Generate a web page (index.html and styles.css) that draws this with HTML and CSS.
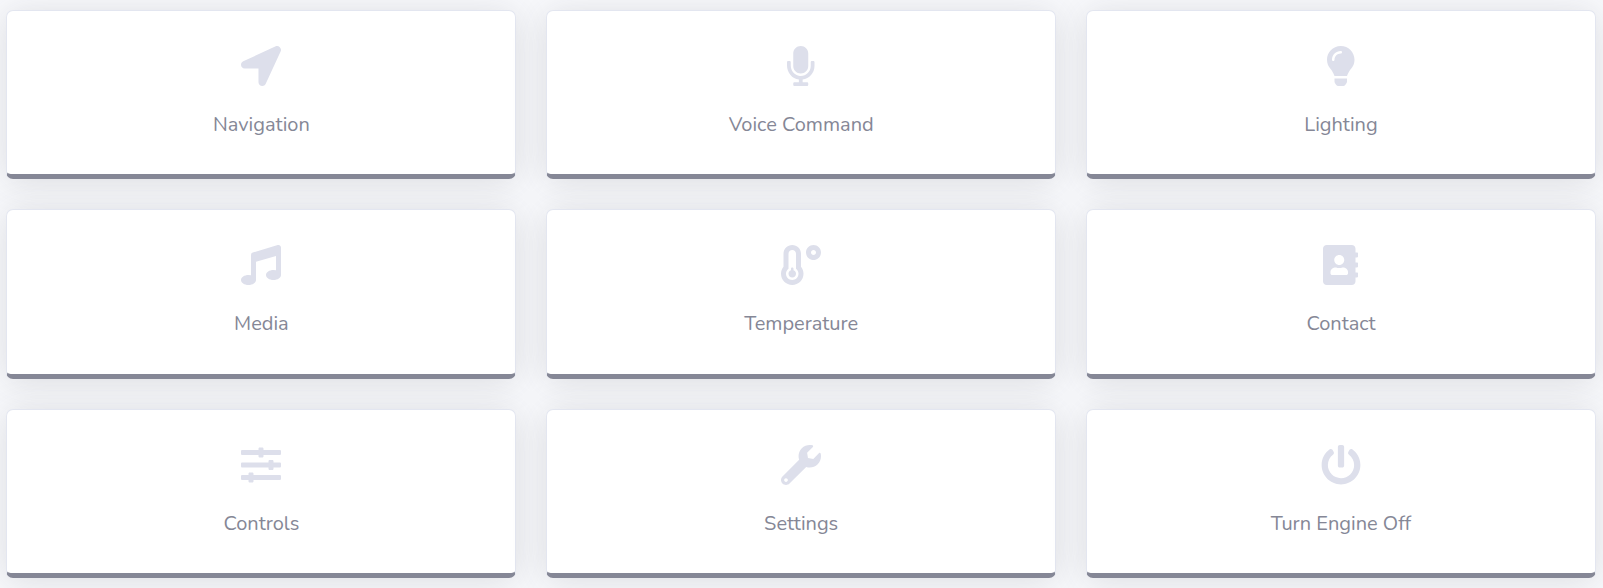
FILE: index.html
```
<!DOCTYPE html>
<html lang="en">
<head>
<meta charset="utf-8">
<title>Dashboard</title>
<link rel="stylesheet" href="styles.css">
</head>
<body>
<main class="grid">
  <a class="card">
    <svg class="icon" viewBox="0 0 512 512"><path d="M444.52 3.52L28.74 195.42c-47.97 22.39-31.98 92.75 19.19 92.75h175.91v175.91c0 51.17 70.36 67.17 92.75 19.19l191.9-415.78c15.99-38.39-25.59-79.97-63.97-63.97z"/></svg>
    <span class="label">Navigation</span>
  </a>
  <a class="card">
    <svg class="icon" viewBox="0 0 352 512"><path d="M176 352c53.02 0 96-42.98 96-96V96c0-53.02-42.98-96-96-96S80 42.98 80 96v160c0 53.02 42.98 96 96 96zm160-160h-16c-8.84 0-16 7.16-16 16v48c0 74.8-64.49 134.82-140.79 127.38C96.71 376.89 48 317.11 48 250.3V208c0-8.84-7.16-16-16-16H16c-8.84 0-16 7.16-16 16v40.16c0 89.64 63.97 169.55 152 181.69V464H96c-8.84 0-16 7.16-16 16v16c0 8.84 7.16 16 16 16h160c8.84 0 16-7.16 16-16v-16c0-8.84-7.16-16-16-16h-56v-33.77C285.71 418.47 352 344.9 352 256v-48c0-8.84-7.16-16-16-16z"/></svg>
    <span class="label">Voice Command</span>
  </a>
  <a class="card">
    <svg class="icon" viewBox="0 0 352 512"><path d="M96.06 454.35c.01 6.29 1.87 12.45 5.36 17.69l17.09 25.69a31.99 31.99 0 0 0 26.64 14.28h61.71a31.99 31.99 0 0 0 26.64-14.28l17.09-25.69a31.989 31.989 0 0 0 5.36-17.69l.04-38.35H96.01l.05 38.35zM0 176c0 44.37 16.45 84.85 43.56 115.78 16.52 18.85 42.36 58.23 52.21 91.45.04.26.07.52.11.78h160.24c.04-.26.07-.51.11-.78 9.85-33.22 35.69-72.6 52.21-91.45C335.55 260.85 352 220.37 352 176 352 78.61 272.91-.3 175.45 0 73.44.31 0 82.97 0 176zm176-80c-44.11 0-80 35.89-80 80 0 8.84-7.16 16-16 16s-16-7.16-16-16c0-61.76 50.24-112 112-112 8.84 0 16 7.16 16 16s-7.16 16-16 16z"/></svg>
    <span class="label">Lighting</span>
  </a>
  <a class="card">
    <svg class="icon" viewBox="0 0 512 512"><path d="M470.38 1.51L150.41 96A32 32 0 0 0 128 126.51v261.41A139 139 0 0 0 96 384c-53 0-96 28.66-96 64s43 64 96 64 96-28.66 96-64V214.32l256-75v184.61a138.4 138.4 0 0 0-32-3.93c-53 0-96 28.66-96 64s43 64 96 64 96-28.65 96-64V32a32 32 0 0 0-41.62-30.49z"/></svg>
    <span class="label">Media</span>
  </a>
  <a class="card">
    <svg class="icon" viewBox="0 0 512 512"><path d="M416 0c-52.9 0-96 43.1-96 96s43.1 96 96 96 96-43.1 96-96-43.1-96-96-96zm0 128c-17.7 0-32-14.3-32-32s14.3-32 32-32 32 14.3 32 32-14.3 32-32 32zm-160-16C256 50.1 205.9 0 144 0S32 50.1 32 112v166.5C12.3 303.2 0 334 0 368c0 79.5 64.5 144 144 144s144-64.5 144-144c0-34-12.3-64.9-32-89.5V112zM144 448c-44.1 0-80-35.9-80-80 0-25.5 12.2-48.9 32-63.8V112c0-26.5 21.5-48 48-48s48 21.5 48 48v192.2c19.8 14.8 32 38.3 32 63.8 0 44.1-35.9 80-80 80zm16-125.1V304c0-8.8-7.2-16-16-16s-16 7.2-16 16v18.9c-18.6 6.6-32 24.2-32 45.1 0 26.5 21.5 48 48 48s48-21.5 48-48c0-20.9-13.4-38.5-32-45.1z"/></svg>
    <span class="label">Temperature</span>
  </a>
  <a class="card">
    <svg class="icon" viewBox="0 0 448 512"><path d="M436 160c6.6 0 12-5.4 12-12v-40c0-6.6-5.4-12-12-12h-20V48c0-26.5-21.5-48-48-48H48C21.5 0 0 21.5 0 48v416c0 26.5 21.5 48 48 48h320c26.5 0 48-21.5 48-48v-48h20c6.6 0 12-5.4 12-12v-40c0-6.6-5.4-12-12-12h-20v-64h20c6.6 0 12-5.4 12-12v-40c0-6.6-5.4-12-12-12h-20v-64h20zm-228-32c35.3 0 64 28.7 64 64s-28.7 64-64 64-64-28.7-64-64 28.7-64 64-64zm112 236.8c0 10.6-10 19.2-22.4 19.2H118.4C106 384 96 375.4 96 364.8v-19.2c0-31.8 30.1-57.6 67.2-57.6h5c12.3 5.1 25.7 8 39.8 8s27.6-2.9 39.8-8h5c37.1 0 67.2 25.8 67.2 57.6v19.2z"/></svg>
    <span class="label">Contact</span>
  </a>
  <a class="card">
    <svg class="icon" viewBox="0 0 512 512"><path d="M496 384H160v-16c0-8.8-7.2-16-16-16h-32c-8.8 0-16 7.2-16 16v16H16c-8.8 0-16 7.2-16 16v32c0 8.8 7.2 16 16 16h80v16c0 8.8 7.2 16 16 16h32c8.8 0 16-7.2 16-16v-16h336c8.8 0 16-7.2 16-16v-32c0-8.8-7.2-16-16-16zm0-160h-80v-16c0-8.8-7.2-16-16-16h-32c-8.8 0-16 7.2-16 16v16H16c-8.8 0-16 7.2-16 16v32c0 8.8 7.2 16 16 16h336v16c0 8.8 7.2 16 16 16h32c8.8 0 16-7.2 16-16v-16h80c8.8 0 16-7.2 16-16v-32c0-8.8-7.2-16-16-16zm0-160H288V48c0-8.8-7.2-16-16-16h-32c-8.8 0-16 7.2-16 16v16H16C7.2 64 0 71.2 0 80v32c0 8.8 7.2 16 16 16h208v16c0 8.8 7.2 16 16 16h32c8.8 0 16-7.2 16-16v-16h208c8.8 0 16-7.2 16-16V80c0-8.8-7.2-16-16-16z"/></svg>
    <span class="label">Controls</span>
  </a>
  <a class="card">
    <svg class="icon" viewBox="0 0 512 512"><path d="M507.73 109.1c-2.24-9.03-13.54-12.09-20.12-5.51l-74.36 74.36-67.88-11.31-11.31-67.88 74.36-74.36c6.62-6.62 3.43-17.9-5.66-20.16-47.38-11.74-99.55.91-136.58 37.93-39.64 39.64-50.55 97.1-34.05 147.2L18.74 402.76c-24.99 24.99-24.99 65.51 0 90.5 24.99 24.99 65.51 24.99 90.5 0l213.21-213.21c50.12 16.71 107.47 5.68 147.37-34.22 37.07-37.07 49.7-89.32 37.91-136.73zM64 472c-13.25 0-24-10.75-24-24 0-13.26 10.75-24 24-24s24 10.74 24 24c0 13.25-10.75 24-24 24z"/></svg>
    <span class="label">Settings</span>
  </a>
  <a class="card">
    <svg class="icon" viewBox="0 0 512 512"><path d="M400 54.1c63 45 104 118.6 104 201.9 0 136.8-110.8 247.7-247.5 248C120 504.3 8.2 393 8 256.4 7.9 173.1 48.9 99.3 111.8 54.2c11.7-8.3 28-4.8 35 7.7L162.6 90c5.9 10.5 3.1 23.8-6.6 31-41.5 30.8-68 79.6-68 134.9-.1 92.3 74.5 168.1 168 168.1 91.6 0 168.6-74.2 168-169.1-.3-51.8-24.7-101.8-68.1-134-9.7-7.2-12.4-20.5-6.5-30.9l15.8-28.1c7-12.4 23.2-16.1 34.8-7.8zM296 264V24c0-13.3-10.7-24-24-24h-32c-13.3 0-24 10.7-24 24v240c0 13.3 10.7 24 24 24h32c13.3 0 24-10.7 24-24z"/></svg>
    <span class="label">Turn Engine Off</span>
  </a>
</main>
</body>
</html>
```
FILE: styles.css
```
* { box-sizing: border-box; }
body {
  margin: 0;
  background: #f8f9fc;
  color: #858796;
  font-family: Nunito, "Open Sans", "Noto Sans", sans-serif;
  font-size: 20px;
  line-height: 30px;
}
.grid {
  display: grid;
  grid-template-columns: repeat(3, 510px);
  grid-auto-rows: 169.4px;
  align-content: start;
  gap: 30px 29.8px;
  height: 100vh;
  padding: 10px 0 0 6.4px;
  overflow: hidden;
}
.card {
  display: flex;
  flex-direction: column;
  align-items: center;
  padding-top: 35px;
  background: #fff;
  border: 1px solid #e3e6f0;
  border-bottom: 5px solid #858796;
  border-radius: 7px;
  box-shadow: 0 3px 35px rgba(58, 59, 69, .15);
}
.icon {
  display: block;
  height: 40px;
  fill: #dddfeb;
}
.label {
  margin-top: 23.9px;
  white-space: nowrap;
}
```
